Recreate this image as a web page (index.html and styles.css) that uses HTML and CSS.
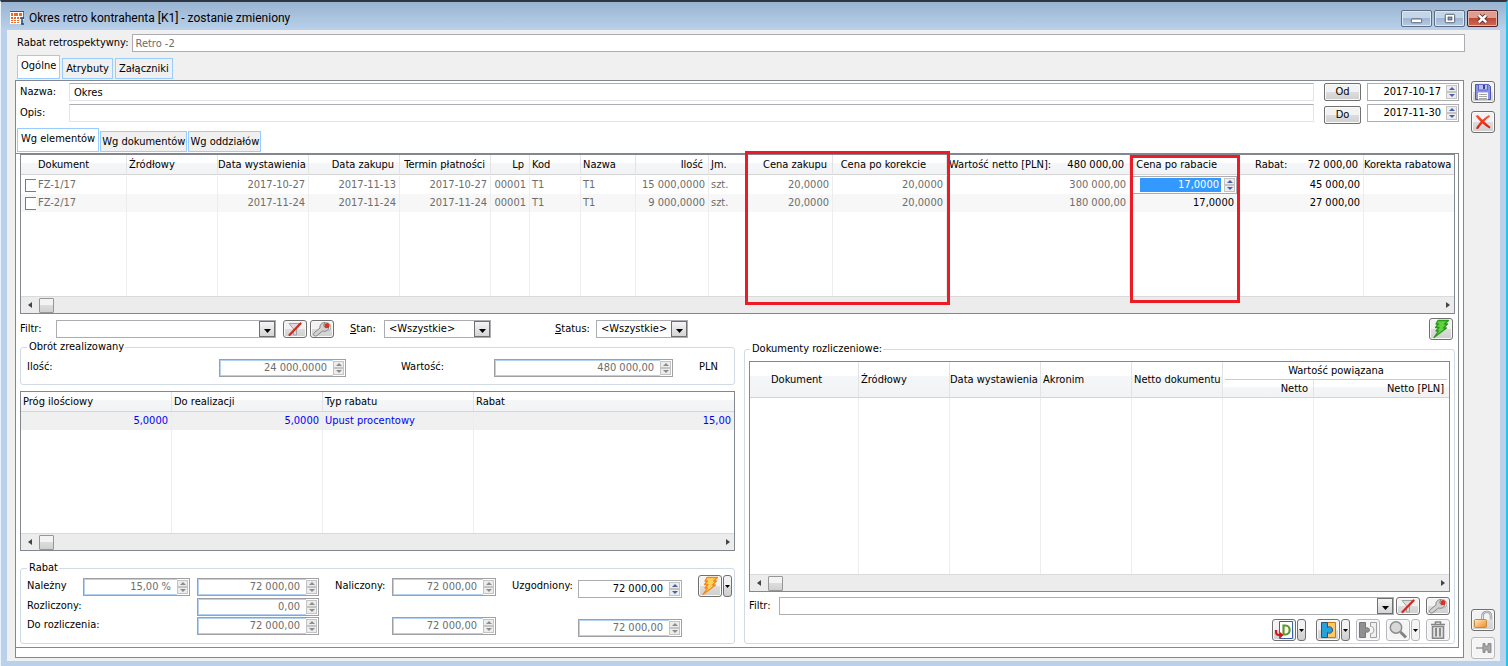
FILE: index.html
```html
<!DOCTYPE html>
<html lang="pl">
<head>
<meta charset="utf-8">
<title>Okres retro kontrahenta [K1]</title>
<link rel="stylesheet" href="styles.css">
</head>
<body>
<svg class="defs" aria-hidden="true">
  <defs>
    <linearGradient id="g-lock" x1="0" y1="0" x2="1" y2="1"><stop offset="0" stop-color="#ffe9c4"/><stop offset="1" stop-color="#f08c1c"/></linearGradient>
    <linearGradient id="g-x" x1="0" y1="0" x2="0" y2="1"><stop offset="0" stop-color="#ff5a36"/><stop offset="1" stop-color="#dd1408"/></linearGradient>
  </defs>
  <symbol id="up" viewBox="0 0 10 7"><path d="M2 5L5 2L8 5Z"/></symbol>
  <symbol id="down" viewBox="0 0 10 7"><path d="M2 2L5 5L8 2Z"/></symbol>
  <symbol id="caret" viewBox="0 0 7 4"><path d="M0 0H7L3.500 4Z"/></symbol>
  <symbol id="left" viewBox="0 0 4 6"><path d="M4 0V6L0 3Z"/></symbol>
  <symbol id="right" viewBox="0 0 4 6"><path d="M0 0V6L4 3Z"/></symbol>
  <symbol id="funnel" viewBox="0 0 18 16"><path d="M3 2.500H15L10.500 8V14H7.500V8Z" fill="#dcdcdc" stroke="#a2a2a2"/><path d="M3.500 14L14.500 2.500" stroke="#d22a22" stroke-width="2.200" stroke-linecap="round"/></symbol>
  <symbol id="wrench" viewBox="0 0 20 16"><path d="M2 14.500C1 13.500 1.500 12.500 2.500 11.500L8 7C7.500 4 9.500 1.500 13 1.500L11.500 4.500L13.500 7L16.500 6C17 9 14 11 10.500 10L5 14.500C4 15.300 3 15.300 2 14.500Z" fill="#d2d2d2" stroke="#858585"/><path d="M13 1.500C17 1 19.500 4 18.500 8L16 10.500" fill="none" stroke="#a9a9a9"/><circle cx="15" cy="4.500" r="2.600" fill="#d83420"/></symbol>
  <symbol id="bolt" viewBox="0 0 20 20"><path d="M7 1.500H17.500L13.500 5H16.500L12.500 9H15.500L3 18.500L7.500 12H5L8 8.500H4.500L7.500 5H5Z" stroke-width="1.300" stroke-linejoin="round"/></symbol>
</svg>

<div class="window">
  <header class="titlebar">
    <svg class="app-icon" viewBox="0 0 14 14"><path d="M0 0H14V9H11V13H0Z" fill="#fff"/><path d="M0 0H14V1H0Z" fill="#45536b"/><path d="M13 1H14V8H13Z" fill="#65718a"/><path d="M1 2h2v3H1zM4 2h4v3H4zM9 2h3v3H9zM1 6h2v2H1zM4 6h2v2H4zM7 6h2v2H7zM1 9h2v1H1zM4 9h2v1H4zM7 9h2v1H7zM1 11h2v1H1zM4 11h2v1H4zM7 11h2v1H7z" fill="#f26522"/><path d="M10 7H14M12 7V13M11 13H14" stroke="#23476f" stroke-width="1.400" fill="none"/></svg>
    <h1>Okres retro kontrahenta [K1] - zostanie zmieniony</h1>
    <div class="caption-buttons">
      <button class="cap" aria-label="Minimalizuj"><svg viewBox="0 0 30 16"><rect x="9.500" y="8.500" width="11" height="4" rx="1" fill="#fff" stroke="#4e5666"/></svg></button>
      <button class="cap" aria-label="Maksymalizuj"><svg viewBox="0 0 30 16"><rect x="10.500" y="3.500" width="10" height="9" rx="1" fill="#fff" stroke="#4e5666"/><rect x="13.500" y="6.500" width="4" height="3" fill="#87a1c2" stroke="#4e5666"/></svg></button>
      <button class="cap close" aria-label="Zamknij"><svg viewBox="0 0 30 16"><path d="M11 4.500L19 12M19 4.500L11 12" stroke="#4d2a30" stroke-width="4.600"/><path d="M11 4.500L19 12M19 4.500L11 12" stroke="#fff" stroke-width="2.600"/></svg></button>
    </div>
  </header>

  <div class="client">
    <main class="main">
      <div class="head-row">
        <label for="rabat-retro">Rabat retrospektywny:</label>
        <input id="rabat-retro" class="text framed" value="Retro -2" disabled>
      </div>

      <nav class="tabs">
        <button class="tab active">Ogólne</button>
        <button class="tab">Atrybuty</button>
        <button class="tab">Załączniki</button>
      </nav>

      <section class="page">
        <div class="form">
          <label for="nazwa">Nazwa:</label>
          <input id="nazwa" class="text" value="Okres">
          <button class="push">Od</button>
          <span class="spin date"><input value="2017-10-17" aria-label="Od"><span class="arrows"><button aria-label="Więcej"><svg><use href="#up"/></svg></button><button aria-label="Mniej"><svg><use href="#down"/></svg></button></span></span>
          <label for="opis">Opis:</label>
          <input id="opis" class="text">
          <button class="push low">Do</button>
          <span class="spin date"><input value="2017-11-30" aria-label="Do"><span class="arrows"><button aria-label="Więcej"><svg><use href="#up"/></svg></button><button aria-label="Mniej"><svg><use href="#down"/></svg></button></span></span>
        </div>

        <nav class="tabs inner">
          <button class="tab active">Wg elementów</button>
          <button class="tab">Wg dokumentów</button>
          <button class="tab">Wg oddziałów</button>
        </nav>

        <div class="subpage">
          <div class="grid-box items">
            <table class="grid">
              <colgroup><col class="w106"><col class="w91"><col class="w91"><col class="w91"><col class="w91"><col class="w39"><col class="w51"><col class="w55"><col class="w73"><col class="w38"><col class="w86"><col class="w114"><col class="w183"><col class="w108"><col class="w126"><col></colgroup>
              <thead><tr>
                <th class="doc">Dokument</th><th>Źródłowy</th><th class="r">Data wystawienia</th><th class="r">Data zakupu</th><th class="r">Termin płatności</th><th class="r">Lp</th><th>Kod</th><th>Nazwa</th><th class="r">Ilość</th><th>Jm.</th><th class="r">Cena zakupu</th><th class="r wide">Cena po korekcie</th><th class="r"><span class="sum net"><span>Wartość netto [PLN]:</span><span>480 000,00</span></span></th><th class="r wide">Cena po rabacie</th><th class="r"><span class="sum rab"><span>Rabat:</span><span>72 000,00</span></span></th><th class="tight">Korekta rabatowa</th>
              </tr></thead>
              <tbody>
              <tr><td><label class="pick"><input type="checkbox">FZ-1/17</label></td><td></td><td class="r">2017-10-27</td><td class="r">2017-11-13</td><td class="r">2017-10-27</td><td class="r">00001</td><td>T1</td><td>T1</td><td class="r">15 000,0000</td><td>szt.</td><td class="r">20,0000</td><td class="r">20,0000</td><td class="r">300 000,00</td><td class="edit"><span class="spin cell"><input class="selected" value="17,0000" aria-label="Cena po rabacie"><span class="arrows"><button aria-label="Więcej"><svg><use href="#up"/></svg></button><button aria-label="Mniej"><svg><use href="#down"/></svg></button></span></span></td><td class="r on">45 000,00</td><td></td></tr>
              <tr class="alt"><td><label class="pick"><input type="checkbox">FZ-2/17</label></td><td></td><td class="r">2017-11-24</td><td class="r">2017-11-24</td><td class="r">2017-11-24</td><td class="r">00001</td><td>T1</td><td>T1</td><td class="r">9 000,0000</td><td>szt.</td><td class="r">20,0000</td><td class="r">20,0000</td><td class="r">180 000,00</td><td class="r on">17,0000</td><td class="r on">27 000,00</td><td></td></tr>
              <tr class="fill"><td></td><td></td><td></td><td></td><td></td><td></td><td></td><td></td><td></td><td></td><td></td><td></td><td></td><td></td><td></td><td></td></tr>
              </tbody>
            </table>
            <div class="hscroll"><button aria-label="W lewo"><svg><use href="#left"/></svg></button><span class="thumb"></span><button class="end" aria-label="W prawo"><svg><use href="#right"/></svg></button></div>
            <div class="mark prices"></div>
            <div class="mark discount"></div>
          </div>

          <div class="filters">
            <label for="filtr">Filtr:</label>
            <span class="combo main-filter"><select id="filtr"><option></option></select><i><svg><use href="#caret"/></svg></i></span>
            <button class="ibtn short" aria-label="Wyczyść filtr"><svg class="funnel"><use href="#funnel"/></svg></button>
            <button class="ibtn short second" aria-label="Konstruktor filtra"><svg class="wrench"><use href="#wrench"/></svg></button>
            <label for="stan" class="stan"><u>S</u>tan:</label>
            <span class="combo c-stan"><select id="stan"><option>&lt;Wszystkie&gt;</option></select><i><svg><use href="#caret"/></svg></i></span>
            <label for="status" class="status"><u>S</u>tatus:</label>
            <span class="combo c-status"><select id="status"><option>&lt;Wszystkie&gt;</option></select><i><svg><use href="#caret"/></svg></i></span>
            <button class="ibtn go" aria-label="Przelicz"><svg class="bolt green"><use href="#bolt"/></svg></button>
          </div>

          <div class="lower">
            <div class="col-left">
              <fieldset class="turnover">
                <legend>Obrót zrealizowany</legend>
                <div class="turn-row">
                  <label for="ilosc">Ilość:</label>
                  <span class="spin off"><input id="ilosc" value="24 000,0000" disabled><span class="arrows"><button disabled aria-label="Więcej"><svg><use href="#up"/></svg></button><button disabled aria-label="Mniej"><svg><use href="#down"/></svg></button></span></span>
                  <label for="wartosc">Wartość:</label>
                  <span class="spin off"><input id="wartosc" value="480 000,00" disabled><span class="arrows"><button disabled aria-label="Więcej"><svg><use href="#up"/></svg></button><button disabled aria-label="Mniej"><svg><use href="#down"/></svg></button></span></span>
                  <span>PLN</span>
                </div>
              </fieldset>

              <div class="grid-box steps">
                <table class="grid">
                  <colgroup><col class="w151"><col class="w151"><col class="w151"><col></colgroup>
                  <thead><tr><th>Próg ilościowy</th><th>Do realizacji</th><th>Typ rabatu</th><th>Rabat</th></tr></thead>
                  <tbody>
                  <tr class="blue"><td class="r">5,0000</td><td class="r">5,0000</td><td>Upust procentowy</td><td class="r">15,00</td></tr>
                  <tr class="fill"><td></td><td></td><td></td><td></td></tr>
                  </tbody>
                </table>
                <div class="hscroll"><button aria-label="W lewo"><svg><use href="#left"/></svg></button><span class="thumb"></span><button class="end" aria-label="W prawo"><svg><use href="#right"/></svg></button></div>
              </div>

              <fieldset class="rebate">
                <legend>Rabat</legend>
                <div class="rebate-grid">
                  <label for="nalezny">Należny</label>
                  <span class="spin off"><input id="nalezny" value="15,00 %" disabled><span class="arrows"><button disabled aria-label="Więcej"><svg><use href="#up"/></svg></button><button disabled aria-label="Mniej"><svg><use href="#down"/></svg></button></span></span>
                  <span class="spin off c4"><input value="72 000,00" aria-label="Należny kwota" disabled><span class="arrows"><button disabled aria-label="Więcej"><svg><use href="#up"/></svg></button><button disabled aria-label="Mniej"><svg><use href="#down"/></svg></button></span></span>
                  <label for="naliczony" class="c6">Naliczony:</label>
                  <span class="spin off c7"><input id="naliczony" value="72 000,00" disabled><span class="arrows"><button disabled aria-label="Więcej"><svg><use href="#up"/></svg></button><button disabled aria-label="Mniej"><svg><use href="#down"/></svg></button></span></span>
                  <label for="uzgodniony" class="c9">Uzgodniony:</label>
                  <span class="spin c10"><input id="uzgodniony" value="72 000,00"><span class="arrows"><button aria-label="Więcej"><svg><use href="#up"/></svg></button><button aria-label="Mniej"><svg><use href="#down"/></svg></button></span></span>
                  <span class="split c12"><button class="ibtn" aria-label="Nalicz"><svg class="bolt orange"><use href="#bolt"/></svg></button><button class="drop" aria-label="Rozwiń"><svg><use href="#caret"/></svg></button></span>

                  <label for="rozliczony" class="r2 c1">Rozliczony:</label>
                  <span class="spin off r2 c4"><input id="rozliczony" value="0,00" disabled><span class="arrows"><button disabled aria-label="Więcej"><svg><use href="#up"/></svg></button><button disabled aria-label="Mniej"><svg><use href="#down"/></svg></button></span></span>

                  <label for="dorozl" class="r3 c1">Do rozliczenia:</label>
                  <span class="spin off r3 c4"><input id="dorozl" value="72 000,00" disabled><span class="arrows"><button disabled aria-label="Więcej"><svg><use href="#up"/></svg></button><button disabled aria-label="Mniej"><svg><use href="#down"/></svg></button></span></span>
                  <span class="spin off r3 c7"><input value="72 000,00" aria-label="Naliczony do rozliczenia" disabled><span class="arrows"><button disabled aria-label="Więcej"><svg><use href="#up"/></svg></button><button disabled aria-label="Mniej"><svg><use href="#down"/></svg></button></span></span>
                  <span class="spin off r3 c10"><input value="72 000,00" aria-label="Uzgodniony do rozliczenia" disabled><span class="arrows"><button disabled aria-label="Więcej"><svg><use href="#up"/></svg></button><button disabled aria-label="Mniej"><svg><use href="#down"/></svg></button></span></span>
                </div>
              </fieldset>
            </div>

            <fieldset class="docs">
              <legend>Dokumenty rozliczeniowe:</legend>
              <div class="grid-box settle">
                <table class="grid">
                  <colgroup><col class="w109"><col class="w91"><col class="w91"><col class="w91"><col class="w91"><col class="w91"><col></colgroup>
                  <thead>
                    <tr><th rowspan="2" class="doc">Dokument</th><th rowspan="2">Źródłowy</th><th rowspan="2" class="tight">Data wystawienia</th><th rowspan="2">Akronim</th><th rowspan="2">Netto dokumentu</th><th colspan="2" class="group"><span>Wartość powiązana</span></th></tr>
                    <tr><th class="r">Netto</th><th class="r">Netto [PLN]</th></tr>
                  </thead>
                  <tbody><tr class="fill"><td></td><td></td><td></td><td></td><td></td><td></td><td></td></tr></tbody>
                </table>
                <div class="hscroll"><button aria-label="W lewo"><svg><use href="#left"/></svg></button><span class="thumb"></span><button class="end" aria-label="W prawo"><svg><use href="#right"/></svg></button></div>
              </div>
              <div class="doc-filter">
                <label for="filtr2">Filtr:</label>
                <span class="combo"><select id="filtr2"><option></option></select><i><svg><use href="#caret"/></svg></i></span>
                <button class="ibtn short" aria-label="Wyczyść filtr"><svg class="funnel"><use href="#funnel"/></svg></button>
                <button class="ibtn short builder" aria-label="Konstruktor filtra"><svg class="wrench"><use href="#wrench"/></svg></button>
              </div>
              <div class="doc-tools">
                <span class="split"><button class="ibtn" aria-label="Generuj dokument"><svg viewBox="0 0 20 20"><path d="M5.500 1.500H18.500V18.500H5.500Z" fill="#fff" stroke="#3b62a8"/><path d="M9.500 5.500H11.500C17 5.500 17 14.500 11.500 14.500H9.500Z" fill="none" stroke="#5c9a28" stroke-width="2.200"/><path d="M2 10V12C2 14 3 15 5 15H7" fill="none" stroke="#d0161b" stroke-width="2"/><path d="M6 12L9.500 15L6 18.500Z" fill="#d0161b"/></svg></button><button class="drop" aria-label="Rozwiń"><svg><use href="#caret"/></svg></button></span>
                <span class="split"><button class="ibtn" aria-label="Powiąż"><svg viewBox="0 0 20 20"><path d="M9 2.500H17.500V17.500H9Z" fill="#ffc861" stroke="#c07a1a"/><path d="M3.500 2.500H9.500V7.500C10.500 6 14.500 6.500 14.500 10C14.500 13.500 10.500 14 9.500 12.500V17.500H3.500Z" fill="#27a0dc" stroke="#24557c"/></svg></button><button class="drop" aria-label="Rozwiń"><svg><use href="#caret"/></svg></button></span>
                <button class="ibtn faded" aria-label="Rozłącz"><svg viewBox="0 0 20 20"><path d="M1.500 2.500H7.500V8.500C9 7 11.500 8 11.500 10C11.500 12 9 13 7.500 11.500V17.500H1.500Z" fill="#8f8f8f" stroke="#777"/><path d="M12.500 2.500H18.500V17.500H12.500V13.500C17 14.500 17 5.500 12.500 6.500Z" fill="#efefef" stroke="#a0a0a0"/></svg></button>
                <span class="split faded"><button class="ibtn" aria-label="Podgląd"><svg viewBox="0 0 20 20"><circle cx="8" cy="7.500" r="5.700" fill="#d8d8d8" stroke="#8b8b8b" stroke-width="1.500"/><path d="M12.500 12L18 17.500" stroke="#828282" stroke-width="3"/></svg></button><button class="drop" aria-label="Rozwiń"><svg><use href="#caret"/></svg></button></span>
                <button class="ibtn faded" aria-label="Usuń"><svg viewBox="0 0 20 20"><path d="M3 4.500H17M7.500 4V2H12.500V4" fill="none" stroke="#858585" stroke-width="1.600"/><path d="M4.500 6.500H15.500V18.200H4.500Z" fill="#e2e2e2" stroke="#858585" stroke-width="1.500"/><path d="M8 8V16.500M12 8V16.500" stroke="#8a8a8a" stroke-width="2"/></svg></button>
              </div>
            </fieldset>
          </div>
        </div>
      </section>
    </main>

    <aside class="side">
      <button class="ibtn" aria-label="Zapisz"><svg viewBox="0 0 20 20"><path d="M2.500 2.500H15.500L17.500 4.500V17.500H2.500Z" fill="#8b93e2" stroke="#4d55b4"/><path d="M5.500 2.500H14.500V8H5.500Z" fill="#b9bff4" stroke="#6067c4"/><path d="M11 3V7" stroke="#3c449c" stroke-width="2"/><path d="M5 10.500H15V17.500H5Z" fill="#fff"/><path d="M6 12.500H14M6 14.500H14M6 16.500H14" stroke="#a5a5a5"/></svg></button>
      <button class="ibtn gap" aria-label="Anuluj"><svg viewBox="0 0 20 20"><path d="M2.500 4L5 3C8 6 13 11.500 17.500 15L16.500 16.500C12 14 7 9.500 2.500 4Z" fill="url(#g-x)"/><path d="M16 3L17 4.500C12.500 7.500 8 12.500 5 17L3 16.500C5.500 11.500 10.500 6 16 3Z" fill="url(#g-x)"/></svg></button>
      <button class="ibtn lock" aria-label="Odblokuj"><svg viewBox="0 0 20 20"><path d="M9.500 9V6C9.500 0.500 18 0.500 18 6V9.500" fill="none" stroke="#8c8c8c" stroke-width="2.400"/><path d="M9.500 9V6C9.500 0.500 18 0.500 18 6V9.500" fill="none" stroke="#e4e4e4"/><rect x="1.500" y="9.500" width="12" height="8" rx="1" fill="url(#g-lock)" stroke="#c98a3d"/></svg></button>
      <button class="ibtn gap2 faded" aria-label="Przypnij"><svg viewBox="0 0 20 20"><path d="M3 10H11" stroke="#999" stroke-width="1.500"/><path d="M10 5.500H12V8H15V5.500H18V14.500H15V12H12V14.500H10Z" fill="#a6a6a6" stroke="#7f7f7f" stroke-width="0.800"/></svg></button>
    </aside>
  </div>
</div>
</body>
</html>
```
FILE: styles.css
```css
* { box-sizing: border-box; }
body {
  margin: 0;
  font: 11px/14px "DejaVu Sans Condensed", "Noto Sans", sans-serif;
  color: #000;
}
button, input, select { font: inherit; color: inherit; margin: 0; padding: 0; }
button { display: flex; align-items: center; justify-content: center; }
svg { display: block; }
.defs { position: absolute; width: 0; height: 0; }

.window {
  display: flex;
  flex-direction: column;
  min-height: 100vh;
  border-top: 2px solid #2e3642;
  border-left: 1px solid #eaf2fb;
  border-right: 2px solid #25c3ea;
  background: #b9d1ea;
  padding: 0 6px 5px;
}
.titlebar {
  display: flex;
  align-items: center;
  height: 28px;
  margin: 0 -6px;
  padding: 4px 8px 0 9px;
  background: linear-gradient(#99b4d1, #b9d1ea);
}
.app-icon { width: 14px; height: 14px; }
.titlebar h1 { flex: 1; margin: 0 0 0 5px; font: 12px/16px Roboto, "Noto Sans", sans-serif; }
.caption-buttons { display: flex; gap: 2px; }
.cap {
  width: 31px;
  height: 17px;
  border: 1px solid #5c6d84;
  border-radius: 2px;
  background: linear-gradient(#c4d5e8 50%, #9db6d3 50%, #b5cbe3);
  box-shadow: inset 0 0 0 1px #dce8f4;
}
.cap svg { width: 29px; height: 15px; }
.cap.close { border-color: #571f23; background: linear-gradient(#dd9d90 50%, #bd4a37 50%, #cf6a52); box-shadow: inset 0 0 0 1px #e6b4aa; }

.client { flex: 1; display: flex; background: #f0f0f0; }
.main { flex: 1; min-width: 0; display: flex; flex-direction: column; padding: 4px 0 3px 8px; }
.side { width: 35px; display: flex; flex-direction: column; align-items: center; padding: 51px 0 2px; }

.text {
  min-width: 0;
  width: 100%;
  height: 18px;
  padding: 0 4px;
  border: 1px solid #e3e3e9;
  border-top-color: #abadb3;
  background: #fff;
}
.text.framed { border-color: #abadb3; }
.text:disabled { color: #6d6d6d; -webkit-text-fill-color: #6d6d6d; }
.head-row { display: flex; align-items: center; gap: 3px; padding-left: 2px; }
.head-row label { flex: none; }
.head-row .text { flex: 1; padding: 0 3px; }

.tabs { display: flex; align-items: flex-end; gap: 2px; padding: 4px 0 1px 2px; height: 28px; }
.tab {
  height: 21px;
  padding: 0 3px;
  border: 1px solid #99ccff;
  background: #f0f0f0;
}
.tab.active { height: 24px; padding: 0 3px 3px; background: #fff; }
.tabs.inner { height: 29px; gap: 1px; padding-left: 1px; }
.inner .tab { padding: 0 1px; }
.inner .active { padding: 0 3px 3px; }

.page {
  flex: 1;
  display: flex;
  flex-direction: column;
  margin-right: 1px;
  border: 1px solid #828790;
  background: #fff;
}
.form {
  display: grid;
  grid-template-columns: 43px 1fr 37px 92px;
  column-gap: 6px;
  row-gap: 3px;
  padding: 2px 4px 0;
  align-items: start;
}
.form label { line-height: 18px; }
.form .text { width: calc(100% - 4px); }
.push {
  height: 18px;
  border: 1px solid #707070;
  border-radius: 2px;
  background: linear-gradient(#f2f2f2 50%, #dddddd 50%, #cfcfcf);
  box-shadow: inset 0 0 0 1px #fafafa;
}
.push.low { margin-top: 2px; }

.spin {
  display: flex;
  height: 18px;
  border: 1px solid #abadb3;
  background: #fff;
  min-width: 0;
}
.spin input { flex: 1; width: 0; border: 0; background: none; text-align: right; padding-right: 6px; }
.arrows { width: 12px; padding: 1px 1px 1px 0; display: flex; flex-direction: column; background: #fff; }
.arrows button { flex: 1; min-height: 0; border: 1px solid #c4c4c4; background: #ececec; overflow: hidden; }
.arrows svg { flex: none; width: 10px; height: 7px; fill: #4a5fb0; }
.off { border: 1px solid #a0a0a4; box-shadow: inset 1px 1px 0 #b4d2f0, inset 0 -1px 0 #b4d2f0; }
.off input { color: #6d6d6d; -webkit-text-fill-color: #6d6d6d; }
.off .arrows svg { fill: #8c8c8c; }
.date input { padding-right: 5px; }

.subpage {
  flex: 1;
  display: flex;
  flex-direction: column;
  margin: 0 4px 9px 0;
  padding: 0 3px 3px 4px;
  border: solid #828790;
  border-width: 1px 1px 1px 0;
}

.grid-box { position: relative; border: 1px solid #828790; background: #fff; }
.grid { width: 100%; table-layout: fixed; border-collapse: separate; border-spacing: 0; }
.grid th {
  height: 20px;
  padding: 0 2px;
  font-weight: normal;
  text-align: left;
  white-space: nowrap;
  border-bottom: 1px solid #d5d5d5;
  border-right: 1px solid #e2e3e5;
  background: linear-gradient(#fff 40%, #f5f6f8 40%, #f2f3f5);
}
.grid td {
  height: 18px;
  padding: 0 2px;
  white-space: nowrap;
  color: #6d6d6d;
  border-right: 1px solid #ededed;
}
.grid th:last-child, .grid td:last-child { border-right: 0; }
.grid th.r { text-align: right; padding: 0 5px 0 0; }
.grid th.wide { padding-right: 20px; }
.grid th.doc { padding-left: 17px; }
.grid th.tight { padding: 0; }
.grid td.r { text-align: right; padding: 0 3px 0 0; }
.grid td.on { color: #000; }
.grid .alt td { background: #f7f7f7; }
.grid .blue td { background: #f0f0f0; color: #00f; }
.sum { display: flex; justify-content: space-between; }
.sum.net { padding-left: 2px; }
.sum.rab { padding-left: 17px; }
.items tbody::before { content: ""; display: block; height: 1px; }
.items .fill td { height: 84px; }
.steps .fill td { height: 103px; }
.settle .fill td { height: 176px; }
.w38 { width: 38px; } .w39 { width: 39px; } .w51 { width: 51px; } .w55 { width: 55px; }
.w73 { width: 73px; } .w86 { width: 86px; } .w91 { width: 91px; } .w106 { width: 106px; }
.w108 { width: 108px; } .w109 { width: 109px; } .w114 { width: 114px; } .w126 { width: 126px; }
.w151 { width: 151px; } .w183 { width: 183px; }

.pick { display: flex; align-items: center; gap: 2px; margin-left: 2px; }
.pick input {
  appearance: none;
  width: 11px;
  height: 13px;
  border: 1px solid #7d6fa8;
  border-right: 0;
  background: #fff;
}
.grid td.edit { padding: 0; }
.spin.cell { padding-left: 9px; height: 18px; }
.spin.cell input { padding-right: 2px; }
.spin.cell .selected { background: #3399ff; color: #fff; margin: 1px 3px 1px 0; }

.hscroll {
  display: flex;
  align-items: center;
  height: 17px;
  padding: 0 4px 0 6px;
  border-top: 1px solid #dadada;
  background: #ececec;
}
.hscroll button { width: 5px; height: 15px; border: 0; background: none; }
.hscroll svg { width: 4px; height: 6px; fill: #444; }
.hscroll .end { margin-left: auto; }
.thumb { width: 15px; height: 15px; margin-left: 7px; border: 1px solid #979797; border-radius: 1px; background: linear-gradient(#f3f3f3 50%, #dcdcdc 50%, #d0d0d0); }

.mark { position: absolute; border: 3px solid #ed1c24; pointer-events: none; }
.prices { left: 724px; top: -4px; width: 205px; height: 154px; }
.discount { left: 1109px; top: 0; width: 110px; height: 148px; }

.combo { position: relative; height: 18px; display: block; }
.combo select { appearance: none; display: block; width: 100%; height: 18px; border: 1px solid #abadb3; border-radius: 0; background: #fff; padding: 0 18px 0 4px; }
.combo i {
  position: absolute;
  top: 1px; right: 1px;
  width: 16px; height: 16px;
  display: flex; align-items: center; justify-content: center;
  border: 1px solid #707070;
  background: linear-gradient(#f4f4f4, #d4d4d4);
  pointer-events: none;
}
.combo i svg { width: 7px; height: 4px; margin-top: 4px; }

.ibtn {
  flex: none;
  width: 24px;
  height: 22px;
  border: 1px solid #707070;
  border-radius: 3px;
  background: linear-gradient(#f2f2f2 50%, #dddddd 50%, #cfcfcf);
  box-shadow: inset 0 0 0 1px #fafafa;
}
.ibtn svg { width: 20px; height: 20px; }
.ibtn.short { height: 18px; }
.ibtn svg.funnel { width: 18px; height: 16px; }
.ibtn svg.wrench { width: 20px; height: 16px; }
.drop {
  width: 9px;
  height: 22px;
  border: 1px solid #707070;
  border-radius: 3px;
  background: linear-gradient(#f2f2f2 50%, #dddddd 50%, #cfcfcf);
}
.drop svg { width: 5px; height: 3px; flex: none; }
.split { display: flex; gap: 1px; }
.ibtn.faded, .faded .ibtn, .faded .drop { background: #f4f4f4; border-color: #b4b8bc; }
.green { fill: #5fd33f; stroke: #2a9a1c; }
.orange { fill: #ffd45e; stroke: #f5881c; }
.gap { margin-top: 8px; }
.lock { margin-top: auto; }
.gap2 { margin-top: 6px; }

.filters { display: flex; align-items: center; height: 26px; margin-top: 2px; padding-right: 2px; }
.filters label { width: 36px; }
.main-filter { width: 220px; }
.filters .short { margin-left: 7px; }
.filters .second { margin-left: 3px; }
.filters .stan { margin-left: 16px; width: 34px; }
.c-stan { width: 107px; }
.filters .status { margin-left: 64px; width: 41px; }
.c-status { width: 92px; }
.go { margin-left: auto; }

fieldset { min-width: 0; margin: 0; padding: 0; border: 1px solid #d0dbe5; border-radius: 3px; }
legend { padding: 0 1px 0 2px; margin-left: 6px; line-height: 14px; }
.lower { flex: 1; display: grid; grid-template-columns: 715px 1fr; column-gap: 9px; }
.col-left { display: flex; flex-direction: column; }
.turnover { height: 45px; margin-top: -2px; }
.turn-row {
  display: grid;
  grid-template-columns: 192px 127px 55px 93px 179px 26px 1fr;
  padding: 5px 0 0 6px;
}
.turn-row > :nth-child(3) { grid-column: 4; }
.turn-row > :nth-child(5) { grid-column: 7; }
.turn-row > label, .turn-row > span:last-child { line-height: 16px; }
.steps { margin-top: 6px; }
.rebate { margin-top: 10px; flex: 1; }
.rebate-grid {
  display: grid;
  grid-template-columns: 56px 107px 7px 122px 16px 57px 104px 16px 66px 104px 16px 36px;
  grid-template-rows: 20px 19px 20px;
  padding: 3px 0 0 6px;
  align-items: start;
}
.rebate-grid > * { grid-row: 1; }
.rebate-grid label { line-height: 16px; white-space: nowrap; }
.rebate-grid > .r2 { grid-row: 2; }
.rebate-grid > .r3 { grid-row: 3; }
.c1 { grid-column: 1; } .c4 { grid-column: 4; } .c6 { grid-column: 6; } .c7 { grid-column: 7; }
.c9 { grid-column: 9; } .c10 { grid-column: 10; margin-top: 2px; } .c12 { grid-column: 12; margin-top: -3px; }

.docs { display: flex; flex-direction: column; padding: 0 4px 1px; }
.docs legend { margin-left: 1px; }
.docs .grid th { height: 18px; }
.docs .grid th.doc { padding-left: 21px; }
.docs .grid th.group { text-align: center; border-bottom: 0; padding: 0 2px; background: #fff; }
.docs .group span { display: block; line-height: 17px; border-bottom: 1px solid #b9d1e4; }
.settle { margin-top: 5px; }
.doc-filter { display: flex; align-items: center; margin-top: 5px; }
.doc-filter label { width: 30px; }
.doc-filter .combo { flex: 1; }
.doc-filter .short { margin-left: 2px; }
.doc-filter .builder { margin-left: 6px; }
.doc-tools { display: flex; justify-content: flex-end; gap: 6px; margin-top: 4px; }
.doc-tools > :first-child { margin-right: 4px; }
```
